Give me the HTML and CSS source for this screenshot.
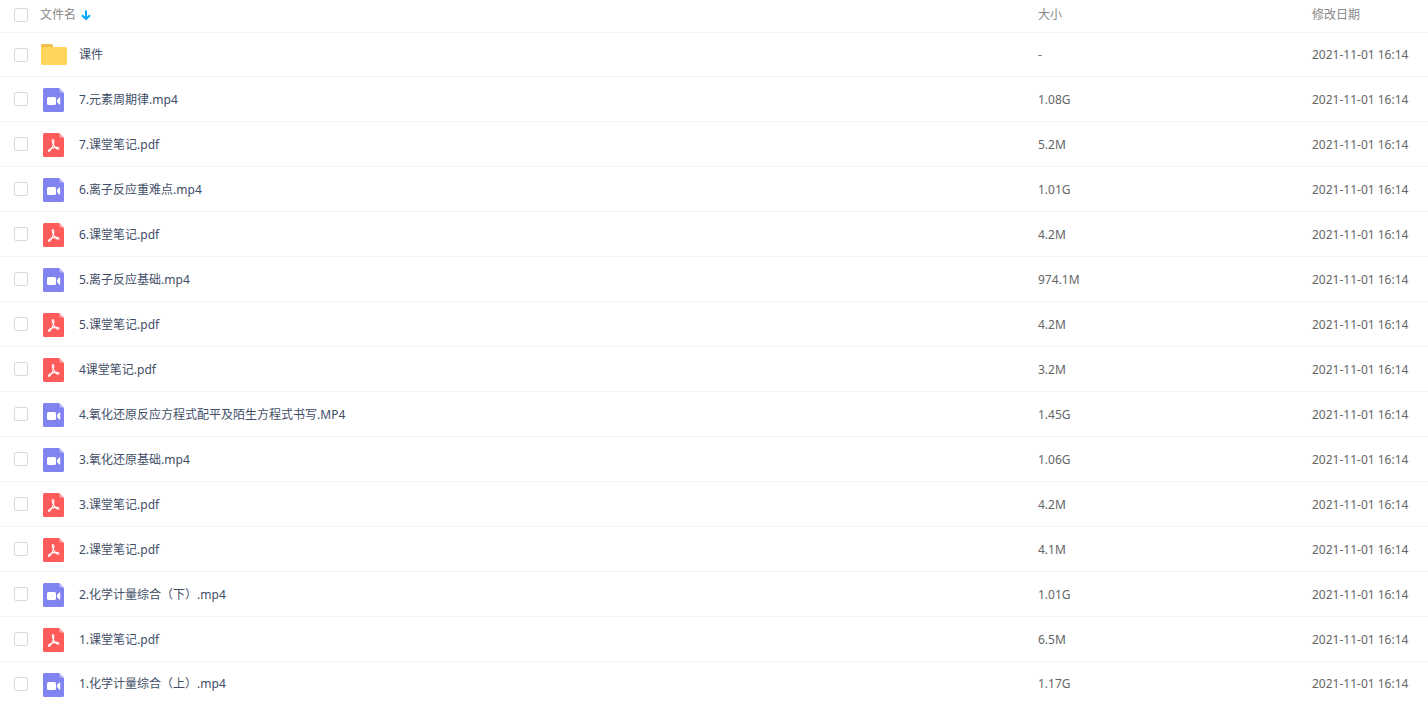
FILE: index.html
```html
<!DOCTYPE html>
<html lang="zh-CN">
<head>
  <meta charset="utf-8">
  <title>文件列表</title>
  <link rel="stylesheet" href="styles.css">
</head>
<body>
  <svg class="icon-defs" aria-hidden="true">
    <symbol id="icon-folder" viewBox="0 0 28 28">
      <path fill="#edbf4a" d="M1 4.500a1.500 1.500 0 0 1 1.500-1.500h9a1.500 1.500 0 0 1 1.500 1.500V8H1z"/>
      <path fill="#ffd55c" d="M1 6h24.500a1.500 1.500 0 0 1 1.500 1.500v15a1.500 1.500 0 0 1-1.500 1.500h-23A1.500 1.500 0 0 1 1 22.500z"/>
    </symbol>
    <symbol id="icon-video" viewBox="0 0 28 28">
      <path fill="#8183f1" d="M4.500 3H19l5 5v17.500a1.500 1.500 0 0 1-1.500 1.500h-18A1.500 1.500 0 0 1 3 25.500v-21A1.500 1.500 0 0 1 4.500 3z"/>
      <path fill="#b9baf8" d="M19.500 3L24 7.500h-3A1.500 1.500 0 0 1 19.500 6z"/>
      <rect fill="#fff" x="7" y="12" width="9" height="8" rx="1.500"/>
      <path fill="#fff" d="M17 15l2.300-2.400q.9-.6.900.4v6q0 1-.9.400L17 17z"/>
    </symbol>
    <symbol id="icon-pdf" viewBox="0 0 28 28">
      <path fill="#ff5b5b" d="M4.500 3H19l5 5v17.500a1.500 1.500 0 0 1-1.500 1.500h-18A1.500 1.500 0 0 1 3 25.500v-21A1.500 1.500 0 0 1 4.500 3z"/>
      <path fill="#ffabab" d="M19.500 3L24 7.500h-3A1.500 1.500 0 0 1 19.500 6z"/>
      <path fill="none" stroke="#fff" stroke-width="1.100" stroke-linejoin="round" d="M13 9.500c-1.200 0-.8 2.600.2 4.500 1 2.200 2.700 4.700 4.700 5.200 1.400.3 1.400-1.500-.1-1.700-2-.3-4.800.2-6.800 1.100-1.500.6-2.700 1.500-2.500 2.400.3 1 1.700-.2 2.600-1.700 1.200-1.900 2.200-4.300 2.600-6.300.3-1.800.2-3.500-.7-3.500z"/>
    </symbol>
  </svg>

  <table class="file-list">
    <thead>
      <tr>
        <th class="col-check"><input type="checkbox" class="check" aria-label="全选"></th>
        <th class="col-name">
          <button type="button" class="sort">文件名
            <svg class="sort-arrow" viewBox="0 0 10 10" aria-hidden="true"><path d="M5 0.500V9M1 5.200l4 3.800 4-3.800"/></svg>
          </button>
        </th>
        <th class="col-size">大小</th>
        <th class="col-date">修改日期</th>
      </tr>
    </thead>
    <tbody>
      <tr>
        <td><input type="checkbox" class="check" aria-labelledby="f1"></td>
        <td><a href="#" class="file" id="f1"><svg class="icon"><use href="#icon-folder"/></svg>课件</a></td>
        <td>-</td>
        <td>2021-11-01 16:14</td>
      </tr>
      <tr>
        <td><input type="checkbox" class="check" aria-labelledby="f2"></td>
        <td><a href="#" class="file" id="f2"><svg class="icon"><use href="#icon-video"/></svg>7.元素周期律.mp4</a></td>
        <td>1.08G</td>
        <td>2021-11-01 16:14</td>
      </tr>
      <tr>
        <td><input type="checkbox" class="check" aria-labelledby="f3"></td>
        <td><a href="#" class="file" id="f3"><svg class="icon"><use href="#icon-pdf"/></svg>7.课堂笔记.pdf</a></td>
        <td>5.2M</td>
        <td>2021-11-01 16:14</td>
      </tr>
      <tr>
        <td><input type="checkbox" class="check" aria-labelledby="f4"></td>
        <td><a href="#" class="file" id="f4"><svg class="icon"><use href="#icon-video"/></svg>6.离子反应重难点.mp4</a></td>
        <td>1.01G</td>
        <td>2021-11-01 16:14</td>
      </tr>
      <tr>
        <td><input type="checkbox" class="check" aria-labelledby="f5"></td>
        <td><a href="#" class="file" id="f5"><svg class="icon"><use href="#icon-pdf"/></svg>6.课堂笔记.pdf</a></td>
        <td>4.2M</td>
        <td>2021-11-01 16:14</td>
      </tr>
      <tr>
        <td><input type="checkbox" class="check" aria-labelledby="f6"></td>
        <td><a href="#" class="file" id="f6"><svg class="icon"><use href="#icon-video"/></svg>5.离子反应基础.mp4</a></td>
        <td>974.1M</td>
        <td>2021-11-01 16:14</td>
      </tr>
      <tr>
        <td><input type="checkbox" class="check" aria-labelledby="f7"></td>
        <td><a href="#" class="file" id="f7"><svg class="icon"><use href="#icon-pdf"/></svg>5.课堂笔记.pdf</a></td>
        <td>4.2M</td>
        <td>2021-11-01 16:14</td>
      </tr>
      <tr>
        <td><input type="checkbox" class="check" aria-labelledby="f8"></td>
        <td><a href="#" class="file" id="f8"><svg class="icon"><use href="#icon-pdf"/></svg>4课堂笔记.pdf</a></td>
        <td>3.2M</td>
        <td>2021-11-01 16:14</td>
      </tr>
      <tr>
        <td><input type="checkbox" class="check" aria-labelledby="f9"></td>
        <td><a href="#" class="file" id="f9"><svg class="icon"><use href="#icon-video"/></svg>4.氧化还原反应方程式配平及陌生方程式书写.MP4</a></td>
        <td>1.45G</td>
        <td>2021-11-01 16:14</td>
      </tr>
      <tr>
        <td><input type="checkbox" class="check" aria-labelledby="f10"></td>
        <td><a href="#" class="file" id="f10"><svg class="icon"><use href="#icon-video"/></svg>3.氧化还原基础.mp4</a></td>
        <td>1.06G</td>
        <td>2021-11-01 16:14</td>
      </tr>
      <tr>
        <td><input type="checkbox" class="check" aria-labelledby="f11"></td>
        <td><a href="#" class="file" id="f11"><svg class="icon"><use href="#icon-pdf"/></svg>3.课堂笔记.pdf</a></td>
        <td>4.2M</td>
        <td>2021-11-01 16:14</td>
      </tr>
      <tr>
        <td><input type="checkbox" class="check" aria-labelledby="f12"></td>
        <td><a href="#" class="file" id="f12"><svg class="icon"><use href="#icon-pdf"/></svg>2.课堂笔记.pdf</a></td>
        <td>4.1M</td>
        <td>2021-11-01 16:14</td>
      </tr>
      <tr>
        <td><input type="checkbox" class="check" aria-labelledby="f13"></td>
        <td><a href="#" class="file" id="f13"><svg class="icon"><use href="#icon-video"/></svg>2.化学计量综合（下）.mp4</a></td>
        <td>1.01G</td>
        <td>2021-11-01 16:14</td>
      </tr>
      <tr>
        <td><input type="checkbox" class="check" aria-labelledby="f14"></td>
        <td><a href="#" class="file" id="f14"><svg class="icon"><use href="#icon-pdf"/></svg>1.课堂笔记.pdf</a></td>
        <td>6.5M</td>
        <td>2021-11-01 16:14</td>
      </tr>
      <tr>
        <td><input type="checkbox" class="check" aria-labelledby="f15"></td>
        <td><a href="#" class="file" id="f15"><svg class="icon"><use href="#icon-video"/></svg>1.化学计量综合（上）.mp4</a></td>
        <td>1.17G</td>
        <td>2021-11-01 16:14</td>
      </tr>
    </tbody>
  </table>
</body>
</html>
```

FILE: styles.css
```css
* {
  box-sizing: border-box;
}
body {
  margin: 0;
  background: #fff;
  font-family: "Noto Sans", "Noto Sans CJK SC", sans-serif;
  font-size: 12px;
  line-height: 19px;
  color: #666;
}
.icon-defs {
  display: none;
}

/* 列表 */
.file-list {
  width: 100%;
  table-layout: fixed;
  border-collapse: separate;
  border-spacing: 0;
}
.file-list th,
.file-list td {
  padding: 0;
  text-align: left;
  vertical-align: middle;
  white-space: nowrap;
  border-bottom: 1px solid #f1f5fb;
}
.file-list th {
  height: 33px;
  padding-bottom: 3px;
  font-weight: normal;
  color: #888;
}
.file-list td {
  height: 45px;
}
.file-list tbody tr:first-child td {
  height: 44px;
}
.file-list tbody tr:last-child td {
  height: 43px;
  border-bottom: 0;
}
.col-check {
  width: 40px;
}
.col-size {
  width: 274px;
}
.col-date {
  width: 116px;
}

/* 复选框 */
.check {
  appearance: none;
  display: block;
  width: 14px;
  height: 14px;
  margin: 0 0 0 14px;
  border: 1px solid #d4dae4;
  border-radius: 2px;
  background: #fff;
  cursor: pointer;
}
.check:checked {
  background: #06a7ff;
  border-color: #06a7ff;
}

.sort {
  display: flex;
  align-items: center;
  gap: 5px;
  padding: 0;
  border: 0;
  background: none;
  font: inherit;
  color: inherit;
  cursor: pointer;
}
.sort-arrow {
  width: 10px;
  height: 10px;
  fill: none;
  stroke: #06a7ff;
  stroke-width: 2;
}

/* 文件名 */
.file {
  display: flex;
  align-items: center;
  gap: 11px;
  color: #424e67;
  text-decoration: none;
}
.file:hover {
  color: #06a7ff;
}
.icon {
  flex: none;
  width: 28px;
  height: 28px;
}
```
